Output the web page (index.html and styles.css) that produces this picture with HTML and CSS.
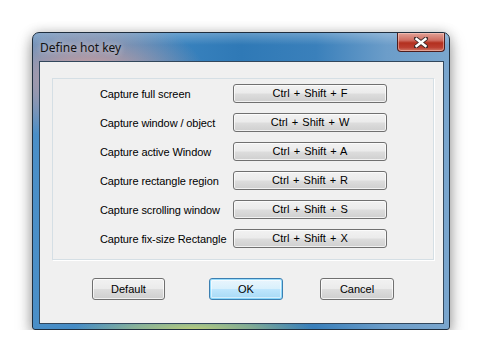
FILE: index.html
```html
<!DOCTYPE html>
<html lang="en">
<head>
    <meta charset="UTF-8">
    <title>Define hot key</title>
    <link rel="stylesheet" href="styles.css">
</head>
<body>
    <div class="desk">
        <div class="window">
            <div class="titlebar">
                <span class="title">Define hot key</span>
                <div class="close">
                    <svg width="14" height="11" viewBox="0 0 14 11">
                        <path d="M2 1.5 L12 9.5 M12 1.5 L2 9.5" stroke="#3b2a2a" stroke-width="4.2" stroke-linecap="square"/>
                        <path d="M2.5 2 L11.5 9 M11.5 2 L2.5 9" stroke="#ffffff" stroke-width="2.4" stroke-linecap="square"/>
                    </svg>
                </div>
            </div>
            <div class="client">
                <div class="group">
                    <span class="label">Capture full screen</span>
                    <div class="key">Ctrl + Shift + F</div>
                    <span class="label">Capture window / object</span>
                    <div class="key">Ctrl + Shift + W</div>
                    <span class="label">Capture active Window</span>
                    <div class="key">Ctrl + Shift + A</div>
                    <span class="label">Capture rectangle region</span>
                    <div class="key">Ctrl + Shift + R</div>
                    <span class="label">Capture scrolling window</span>
                    <div class="key">Ctrl + Shift + S</div>
                    <span class="label">Capture fix-size Rectangle</span>
                    <div class="key">Ctrl + Shift + X</div>
                </div>
                <div class="actions">
                    <div class="btn btn-default">Default</div>
                    <div class="btn btn-ok">OK</div>
                    <div class="btn btn-cancel">Cancel</div>
                </div>
            </div>
        </div>
    </div>
</body>
</html>
```

FILE: styles.css
```css
body {
    margin: 0;
    background: #fff;
    font-family: 'Liberation Sans', Arial, sans-serif;
    font-size: 11px;
    color: #000;
}
.desk {
    padding: 32px 0 0 32px;
}
.window {
    width: 418px;
    height: 298px;
    box-sizing: border-box;
    border: 1px solid #1f2e3e;
    border-radius: 7px 7px 3px 3px;
    padding: 0 5px 5px 6px;
    display: flex;
    flex-direction: column;
    background:
        radial-gradient(ellipse 170px 90px at 55px 45px, rgba(222, 160, 152, 1), rgba(222, 160, 152, 0) 70%),
        radial-gradient(ellipse 120px 16px at 160px 100%, rgba(185, 205, 125, 1), rgba(185, 205, 125, 0.6) 50%, rgba(185, 205, 125, 0) 100%),
        linear-gradient(180deg, rgba(255, 255, 255, 0.25), rgba(255, 255, 255, 0) 12px),
        linear-gradient(90deg, #4a8fc8 0%, #3f88c3 25%, #2f79b6 50%, #3a80bb 68%, #6c9dc9 85%, #7aa6ce 100%);
    box-shadow: 0 7px 16px rgba(0, 0, 0, 0.35), 0 0 12px rgba(0, 0, 0, 0.18);
}
.titlebar {
    height: 28px;
    display: flex;
    justify-content: space-between;
    align-items: flex-start;
}
.title {
    font-family: 'Noto Sans', sans-serif;
    font-size: 12px;
    padding: 6px 0 0 1px;
    color: #111;
    text-shadow: 0 0 6px rgba(255, 255, 255, 0.7);
}
.close {
    width: 48px;
    height: 19px;
    box-sizing: border-box;
    margin-right: -1px;
    border: 1px solid #4d1d1d;
    border-top: none;
    border-radius: 0 0 4px 4px;
    background: linear-gradient(180deg, #e2a298 0%, #cf6e62 40%, #b3301f 55%, #bb3e30 80%, #d07a68 100%);
    box-shadow: inset 0 0 0 1px rgba(255, 220, 210, 0.45);
    display: flex;
    align-items: center;
    justify-content: center;
}
.client {
    flex: 1;
    border: 1px solid #32475c;
    background: #f0f0f0;
}
.group {
    margin: 16px 0 0 12px;
    width: 382px;
    height: 182px;
    box-sizing: border-box;
    border: 1px solid #d5dfe5;
    box-shadow: 1px 1px 0 #fff;
    padding: 5px 0 0 47px;
    display: grid;
    grid-template-columns: 133px 154px;
    grid-auto-rows: 19px;
    row-gap: 10px;
    align-items: center;
}
.label {
    letter-spacing: -0.1px;
}
.key, .btn {
    box-sizing: border-box;
    border: 1px solid #707070;
    border-radius: 3px;
    background: linear-gradient(180deg, #f2f2f2 0%, #ebebeb 48%, #dddddd 52%, #cfcfcf 100%);
    box-shadow: inset 0 0 0 1px rgba(255, 255, 255, 0.7);
    text-align: center;
}
.key {
    height: 19px;
    line-height: 17px;
    word-spacing: 1px;
}
.actions {
    display: flex;
    margin-top: 18px;
    padding-left: 52px;
}
.btn {
    width: 73px;
    height: 22px;
    line-height: 20px;
}
.btn-ok {
    width: 74px;
    margin-left: 44px;
    border-color: #3c7fb1;
    background: linear-gradient(180deg, #eaf6fd 0%, #d9f0fc 48%, #bee6fd 52%, #a7d9f5 100%);
    box-shadow: inset 0 0 0 1px rgba(90, 200, 250, 0.6), inset 0 0 0 2px rgba(255, 255, 255, 0.5);
}
.btn-cancel {
    width: 74px;
    margin-left: 37px;
}
```
